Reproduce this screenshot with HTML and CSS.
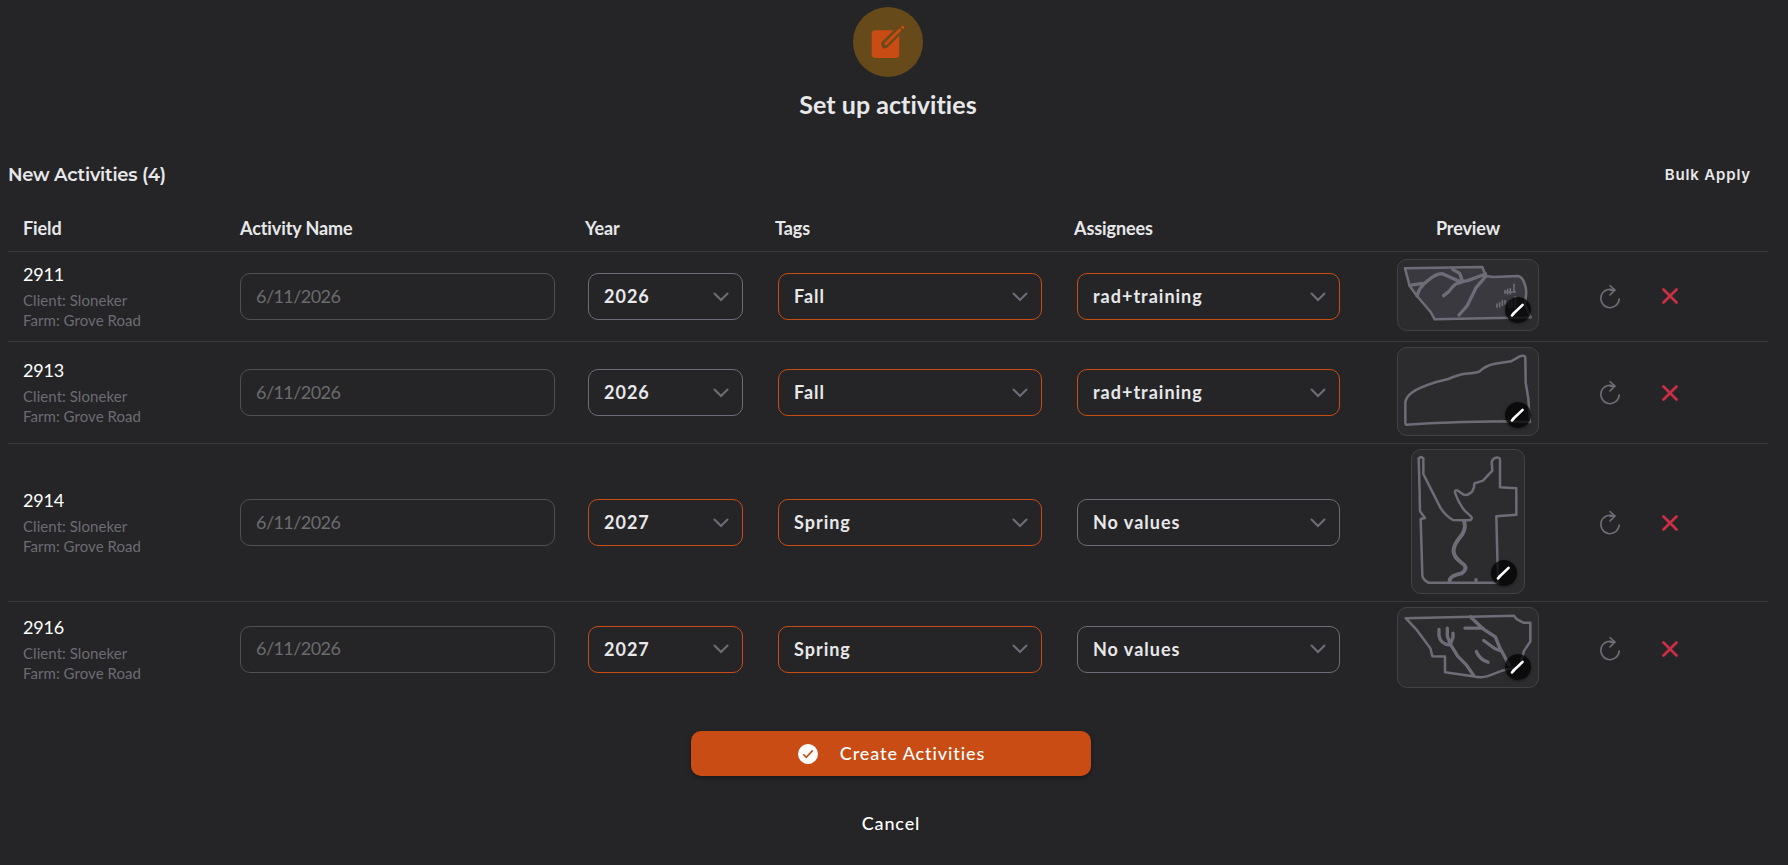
FILE: index.html
```html
<!DOCTYPE html>
<html lang="en">
<head>
  <meta charset="UTF-8" />
  <meta name="viewport" content="width=device-width, initial-scale=1.0" />
  <title>Set up activities</title>
  <link rel="stylesheet" href="styles.css">
</head>
<body>
  <!-- Shared icons -->
  <svg class="sprite" width="0" height="0">
    <symbol id="chevron" viewBox="0 0 16 10"><path d="M1.5 1.5 8 8l6.5-6.5" /></symbol>
    <symbol id="refresh" viewBox="0 0 22 26"><path d="M15 6.2A9.2 9.2 0 1 0 20.2 15M11 1.5l5 4.6-5 4.8M16 6.1 11 6.3" /></symbol>
    <symbol id="cross" viewBox="0 0 16 16"><path d="M1.5 1.5l13 13M14.5 1.5l-13 13" /></symbol>
    <symbol id="pencil" viewBox="0 0 26 26"><path d="M8.3 16.8 17.6 7.9" /><path class="tip" d="M7 18.4l1.4-1.6" /></symbol>
  </svg>

  <div class="page">
    <header class="hero">
      <div class="hero-icon">
        <svg viewBox="0 0 210 210">
          <rect class="sheet" x="56" y="70" width="83" height="83" rx="12" />
          <path class="gap" d="M97 111 148 60" />
          <path class="gap-tip" d="M95 115 103 107" />
          <path class="pen" d="M99 110 140 69" />
          <path class="pen-tip" d="M94 115 100 104 105 109Z" />
          <circle class="sheet" cx="149" cy="61" r="5" />
        </svg>
      </div>
      <h1>Set up activities</h1>
    </header>

    <div class="toolbar">
      <h2>New Activities (4)</h2>
      <button type="button" class="bulk-button">Bulk Apply</button>
    </div>

    <div class="table">
      <div class="table-head">
        <span>Field</span>
        <span>Activity Name</span>
        <span>Year</span>
        <span>Tags</span>
        <span>Assignees</span>
        <span class="center">Preview</span>
      </div>

      <div class="row">
        <div class="field">
          <strong>2911</strong>
          <span>Client: Sloneker</span>
          <span>Farm: Grove Road</span>
        </div>
        <div class="name-input">6/11/2026</div>
        <div class="select year"><span>2026</span><svg><use href="#chevron" /></svg></div>
        <div class="select changed"><span>Fall</span><svg><use href="#chevron" /></svg></div>
        <div class="select changed assignee"><span>rad+training</span><svg><use href="#chevron" /></svg></div>
        <div class="preview preview-2911">
          <svg class="shape" viewBox="52 43 426 216">
            <path class="filled" d="M76 71 308 67 319 94 342 97 415 94Q426 96 432 110 442 132 439 152L436 180 453 218 165 224 153 202 112 154 90 124Z" />
            <path class="thick" d="M90 122 128 116M112 154Q118 128 144 108 170 86 188 87L232 107Q248 112 264 108L318 88M219 74 240 86 248 108M248 112 228 118Q216 128 208 140L192 153M319 94 290 128 262 184 238 211" />
            <path class="thick fine" d="M403 119V142M376 138V146M384 134V148M392 132V147M376 142H407M407 156V190M396 166V188M352 178V188M360 174V186M368 168V182M376 168V178M388 172V186" />
          </svg>
          <span class="edit"><svg><use href="#pencil" /></svg></span>
        </div>
        <svg class="refresh"><use href="#refresh" /></svg>
        <svg class="remove"><use href="#cross" /></svg>
      </div>

      <div class="row">
        <div class="field">
          <strong>2913</strong>
          <span>Client: Sloneker</span>
          <span>Farm: Grove Road</span>
        </div>
        <div class="name-input">6/11/2026</div>
        <div class="select year"><span>2026</span><svg><use href="#chevron" /></svg></div>
        <div class="select changed"><span>Fall</span><svg><use href="#chevron" /></svg></div>
        <div class="select changed assignee"><span>rad+training</span><svg><use href="#chevron" /></svg></div>
        <div class="preview preview-2913">
          <svg class="shape" viewBox="52 21 426 267">
            <path d="M79 254 77 250V188Q78 172 96 158 116 143 170 126L206 117Q236 103 258 101 292 99 300 94 318 76 346 71L394 64 420 49Q434 44 437 52L438 128Q442 150 446 176L451 246 380 244 250 246 150 250Z" />
          </svg>
          <span class="edit"><svg><use href="#pencil" /></svg></span>
        </div>
        <svg class="refresh"><use href="#refresh" /></svg>
        <svg class="remove"><use href="#cross" /></svg>
      </div>

      <div class="row">
        <div class="field">
          <strong>2914</strong>
          <span>Client: Sloneker</span>
          <span>Farm: Grove Road</span>
        </div>
        <div class="name-input">6/11/2026</div>
        <div class="select year changed"><span>2027</span><svg><use href="#chevron" /></svg></div>
        <div class="select changed"><span>Spring</span><svg><use href="#chevron" /></svg></div>
        <div class="select assignee"><span>No values</span><svg><use href="#chevron" /></svg></div>
        <div class="preview preview-2914">
          <svg class="shape" viewBox="64 27 342 435">
            <path d="M87 55Q94 48 101 55V102L152 203Q168 228 190 240L240 241Q250 236 244 229L224 211Q206 188 196 158 195 146 206 153L222 164Q234 168 248 154L253 142 254 130 280 122 308 92 306 66Q310 54 318 53 331 50 331 60V142L380 145V224L320 229 325 428 116 428Q99 418 98 406L93 237 106 234 91 214 89 120Z" />
            <path class="river" d="M223 243Q230 262 218 283 184 322 194 343 198 356 224 375 234 387 216 400 178 408 180 424" />
            <path class="thick" d="M259 419v4" />
          </svg>
          <span class="edit"><svg><use href="#pencil" /></svg></span>
        </div>
        <svg class="refresh"><use href="#refresh" /></svg>
        <svg class="remove"><use href="#cross" /></svg>
      </div>

      <div class="row">
        <div class="field">
          <strong>2916</strong>
          <span>Client: Sloneker</span>
          <span>Farm: Grove Road</span>
        </div>
        <div class="name-input">6/11/2026</div>
        <div class="select year changed"><span>2027</span><svg><use href="#chevron" /></svg></div>
        <div class="select changed"><span>Spring</span><svg><use href="#chevron" /></svg></div>
        <div class="select assignee"><span>No values</span><svg><use href="#chevron" /></svg></div>
        <div class="preview preview-2916">
          <svg class="shape" viewBox="52 28 426 240">
            <path d="M78 60 403 53 410 62 432 74 452 74V130L433 158 428 176 420 205 372 216 324 234Q304 240 280 234L196 222V175L158 174 152 150 112 96Z" />
            <path class="thick" d="M272 56 310 92 347 116 360 148 388 200M256 90H310M312 127 345 151 366 159M290 160Q300 184 325 192M178 94V112Q182 138 210 140M203 90V114L212 138 234 174 260 200 282 232M220 105V118L212 138" />
          </svg>
          <span class="edit"><svg><use href="#pencil" /></svg></span>
        </div>
        <svg class="refresh"><use href="#refresh" /></svg>
        <svg class="remove"><use href="#cross" /></svg>
      </div>
    </div>

    <div class="actions">
      <button type="button" class="create-button">
        <svg viewBox="0 0 20 20"><circle cx="10" cy="10" r="10" /><path d="M5.3 10.2l3 3.2 6.4-7" /></svg>
        <span>Create Activities</span>
      </button>
      <button type="button" class="cancel-button">Cancel</button>
    </div>
  </div>
</body>
</html>
```
FILE: styles.css
```css
* {
  box-sizing: border-box;
}
body {
  font-family: Lato, 'Liberation Sans', sans-serif;
  font-variant-ligatures: none;
  background: #252527;
  color: #e8e8ea;
  margin: 0;
  height: 865px;
  overflow: hidden;
}
h1, h2 {
  margin: 0;
}
button {
  font-family: inherit;
  font-variant-ligatures: none;
  border: none;
  background: none;
  padding: 0;
  cursor: pointer;
}
.sprite {
  position: absolute;
}
.page {
  width: 1760px;
  margin-left: 8px;
  padding-top: 7px;
}

/* Heading */
.hero {
  display: flex;
  flex-direction: column;
  align-items: center;
}
.hero-icon {
  width: 70px;
  height: 70px;
  border-radius: 50%;
  background: #664a1a;
}
.hero-icon svg {
  display: block;
}
.hero-icon .sheet {
  fill: #c94c14;
}
.hero-icon path {
  fill: none;
  stroke-linecap: round;
}
.hero-icon .gap {
  stroke: #664a1a;
  stroke-width: 23;
}
.hero-icon .gap-tip {
  stroke: #664a1a;
  stroke-width: 18;
}
.hero-icon .pen {
  stroke: #c94c14;
  stroke-width: 9;
}
.hero-icon .pen-tip {
  fill: #c94c14;
}
.hero h1 {
  font-size: 25px;
  line-height: 30px;
  letter-spacing: 0.05px;
  margin-top: 12px;
}
.toolbar {
  display: flex;
  justify-content: space-between;
  align-items: center;
  height: 30px;
  margin-top: 41px;
  padding-right: 17px;
}
.toolbar h2 {
  font-family: Montserrat, Lato, sans-serif;
  font-size: 18px;
  font-weight: 600;
  letter-spacing: -0.25px;
}
.bulk-button {
  font-family: Inter, sans-serif;
  font-size: 15px;
  font-weight: 600;
  letter-spacing: 0.85px;
  padding-bottom: 2px;
  color: #e8e8ea;
}

/* Activities table */
.table-head,
.row {
  display: grid;
  grid-template-columns: 217px 345px 190px 299px 323px 142px 60px 22px 41px 16px;
  align-items: center;
  padding-left: 15px;
  border-bottom: 1px solid #3b3b3d;
}
.table-head {
  height: 62px;
  padding-top: 14px;
  font-size: 18px;
  font-weight: bold;
  letter-spacing: -0.1px;
}
.center {
  text-align: center;
}
.row {
  min-height: 90px;
  padding-top: 5px;
  padding-bottom: 7px;
}
.row:last-child {
  border-bottom: none;
  padding-top: 6px;
}
.row > * {
  margin-top: 2px;
}
.field {
  display: flex;
  flex-direction: column;
  font-size: 15px;
  line-height: 20px;
  letter-spacing: 0.06px;
  color: #6c6b73;
}
.field strong {
  font-size: 18px;
  font-weight: normal;
  line-height: 24px;
  letter-spacing: -0.2px;
  color: #fff;
  margin: -1px 0 4px;
}
.name-input,
.select {
  height: 47px;
  border: 1px solid #505053;
  border-radius: 10px;
  padding: 0 15px;
  display: flex;
  align-items: center;
  font-size: 18px;
}
.name-input {
  width: 315px;
  padding-bottom: 2px;
  letter-spacing: -0.55px;
  color: #6c6b6f;
}
.select {
  width: 264px;
  margin-left: 3px;
  padding-right: 13px;
  border-color: #6e6c76;
  justify-content: space-between;
  font-weight: bold;
  letter-spacing: 1px;
}
.select span {
  line-height: 20px;
  margin-top: -1px;
}
.select.year {
  width: 155px;
}
.select.assignee {
  width: 263px;
}
.select.changed {
  border-color: #c94c14;
}
.select svg {
  width: 16px;
  height: 10px;
  fill: none;
  stroke: #6e6c76;
  stroke-width: 2.1;
  stroke-linecap: round;
}
.row .preview {
  position: relative;
  justify-self: center;
  width: 142px;
  margin-top: 0;
  border: 1px solid #424244;
  border-radius: 10px;
  background: #2c2c2e;
}
.row .preview-2911 {
  height: 72px;
  margin-top: -2px;
}
.preview-2913 {
  height: 89px;
}
.row .preview-2914 {
  width: 114px;
  height: 145px;
}
.row .preview-2916 {
  height: 81px;
  margin-top: -1px;
}
.preview .shape {
  display: block;
  width: calc(100% + 2px);
  height: calc(100% + 2px);
  margin: -1px;
  fill: none;
  stroke: #6e6c76;
  stroke-width: 7.5;
  stroke-linejoin: round;
  stroke-linecap: round;
}
.shape .filled {
  fill: #3a393f;
}
.shape .thick {
  stroke-width: 10;
}
.shape .river {
  stroke-width: 12;
}
.shape .fine {
  stroke-width: 5;
}
.edit {
  position: absolute;
  right: 7px;
  bottom: 7px;
  width: 26px;
  height: 26px;
  border-radius: 50%;
  background: rgba(0, 0, 0, 0.75);
  box-shadow: 0 1px 3px rgba(0, 0, 0, 0.4);
}
.edit svg {
  display: block;
  width: 26px;
  height: 26px;
  stroke: #fff;
  stroke-width: 2.6;
  stroke-linecap: round;
}
.row .refresh {
  grid-column: 8;
  width: 22px;
  height: 26px;
  margin-top: 2px;
  fill: none;
  stroke: #6e6c76;
  stroke-width: 1.6;
  stroke-linecap: round;
}
.row .remove {
  grid-column: 10;
  width: 16px;
  height: 16px;
  stroke: #cc2f45;
  stroke-width: 2.7;
  stroke-linecap: round;
}
.row .preview-2911 ~ .remove {
  margin-top: 0;
}

/* Footer buttons */
.actions {
  display: flex;
  flex-direction: column;
  align-items: center;
  padding: 36px 0 0 6px;
}
.create-button {
  display: flex;
  align-items: center;
  justify-content: center;
  gap: 22px;
  width: 400px;
  height: 45px;
  border-radius: 10px;
  background: #c94c14;
  box-shadow: 0 2px 4px rgba(0, 0, 0, 0.35);
  color: #fff;
  font-size: 18px;
  font-weight: 500;
  letter-spacing: 0.9px;
  padding-left: 1px;
}
.create-button span {
  margin-top: -2px;
}
.create-button svg {
  width: 20px;
  height: 20px;
  fill: #fff;
}
.create-button path {
  fill: none;
  stroke: #c94c14;
  stroke-width: 1.6;
}
.cancel-button {
  margin-top: 35px;
  color: #fff;
  font-size: 18px;
  font-weight: 500;
  line-height: 24px;
  letter-spacing: 0.85px;
}
```
